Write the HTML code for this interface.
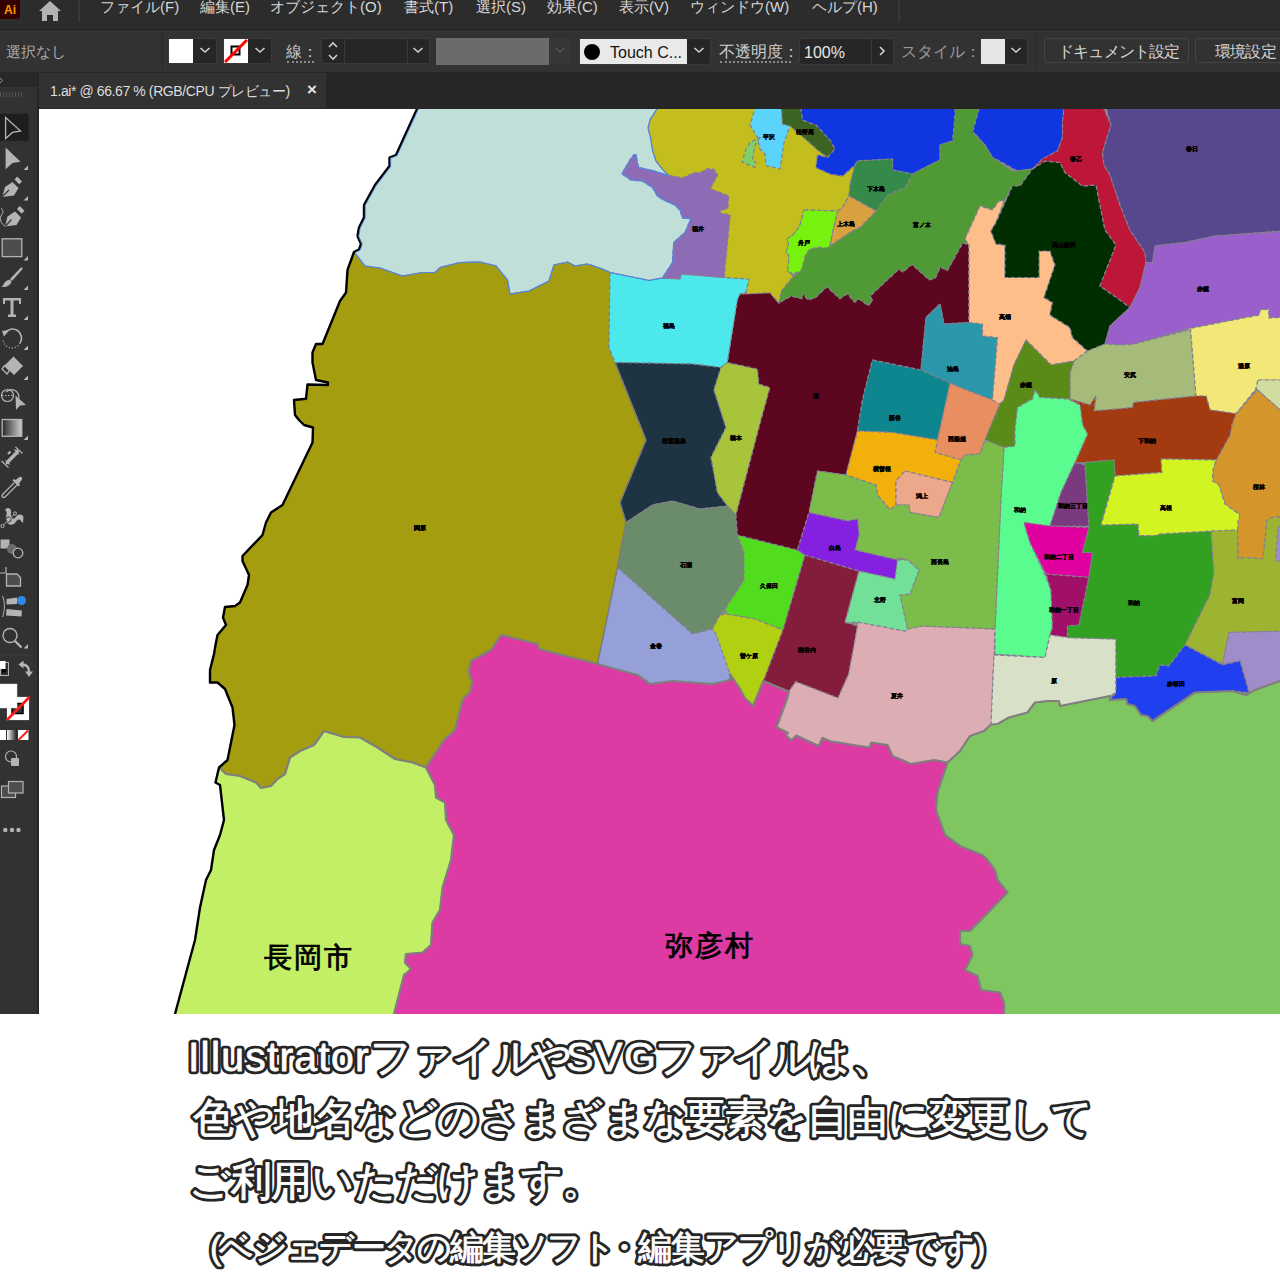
<!DOCTYPE html>
<html lang="ja"><head><meta charset="utf-8">
<style>
html,body{margin:0;padding:0;width:1280px;height:1280px;overflow:hidden;background:#fff;font-family:"Liberation Sans",sans-serif;}
.a{position:absolute;white-space:nowrap;}
#menubar{position:absolute;left:0;top:0;width:1280px;height:29px;background:#2c2c2c;border-bottom:1px solid #202020;}
#menubar .m{position:absolute;top:-2px;font-size:15px;line-height:18px;color:#d6d6d6;}
#ctrl{position:absolute;left:0;top:30px;width:1280px;height:42px;background:#323232;border-bottom:1px solid #262626;}
#tabbar{position:absolute;left:0;top:73px;width:1280px;height:36px;background:#262626;}
#tool{position:absolute;left:0;top:73px;width:37px;height:1207px;background:#323232;border-right:2px solid #262626;}
.dd{position:absolute;background:#262626;border:1px solid #3a3a3a;border-radius:3px;box-sizing:border-box;}
.txt{position:absolute;color:#fff;font-feature-settings:"palt";}
.ts{-webkit-text-stroke:5px #232323;color:#232323;}
</style></head><body>
<div id="menubar">
 <div class="a" style="left:0;top:0;width:20px;height:19px;background:#330000;border-radius:0 0 3px 0;"></div>
 <div class="a" style="left:4px;top:3px;font-size:12px;font-weight:bold;color:#ff9a00;line-height:14px;">Ai</div>
 <svg class="a" style="left:36px;top:0" width="28" height="24" viewBox="0 0 28 24"><path d="M14 1 L25 11 L22 11 L22 21 L17 21 L17 15 L11 15 L11 21 L6 21 L6 11 L3 11 Z" fill="#b3b3b3"/></svg>
 <div class="a" style="left:78px;top:0;width:2px;height:22px;background:#383838"></div>
 <div class="m a" style="left:100px">ファイル(F)</div>
 <div class="m a" style="left:200px">編集(E)</div>
 <div class="m a" style="left:270px">オブジェクト(O)</div>
 <div class="m a" style="left:404px">書式(T)</div>
 <div class="m a" style="left:476px">選択(S)</div>
 <div class="m a" style="left:547px">効果(C)</div>
 <div class="m a" style="left:619px">表示(V)</div>
 <div class="m a" style="left:690px">ウィンドウ(W)</div>
 <div class="m a" style="left:812px">ヘルプ(H)</div>
 <div class="a" style="left:898px;top:0;width:2px;height:22px;background:#383838"></div>
</div>
<div id="ctrl">
 <div class="a" style="left:6px;top:13px;font-size:15px;line-height:18px;color:#a9a9a9">選択なし</div>
 <div class="a" style="left:162px;top:2px;width:1px;height:38px;background:#2a2a2a"></div>
 <!-- fill swatch -->
 <div class="dd" style="left:168px;top:8px;width:49px;height:26px;"></div>
 <div class="a" style="left:169px;top:9px;width:24px;height:24px;background:#fff"></div>
 <svg class="a" style="left:199px;top:16px" width="12" height="8"><path d="M1.5 2 L6 6 L10.5 2" stroke="#cfcfcf" stroke-width="1.6" fill="none"/></svg>
 <!-- stroke swatch -->
 <div class="dd" style="left:223px;top:8px;width:49px;height:26px;"></div>
 <div class="a" style="left:224px;top:9px;width:24px;height:24px;background:#fff;overflow:hidden">
  <svg width="24" height="24"><rect x="7.5" y="7.5" width="8" height="8" fill="none" stroke="#000" stroke-width="2"/><path d="M1 23 L23 1" stroke="#ff0000" stroke-width="3"/></svg>
 </div>
 <svg class="a" style="left:254px;top:16px" width="12" height="8"><path d="M1.5 2 L6 6 L10.5 2" stroke="#cfcfcf" stroke-width="1.6" fill="none"/></svg>
 <div class="a" style="left:286px;top:13px;font-size:16px;line-height:18px;color:#c9c9c9">線：</div>
 <div class="a" style="left:287px;top:31px;width:27px;height:0;border-top:2px dotted #8a8a8a"></div>
 <div class="dd" style="left:321px;top:8px;width:109px;height:26px;"></div>
 <div class="a" style="left:344px;top:9px;width:1px;height:24px;background:#3a3a3a"></div>
 <div class="a" style="left:407px;top:9px;width:1px;height:24px;background:#3a3a3a"></div>
 <svg class="a" style="left:327px;top:11px" width="12" height="20"><path d="M2 6 L6 2 L10 6 M2 14 L6 18 L10 14" stroke="#cfcfcf" stroke-width="1.6" fill="none"/></svg>
 <svg class="a" style="left:412px;top:16px" width="12" height="8"><path d="M1.5 2 L6 6 L10.5 2" stroke="#cfcfcf" stroke-width="1.6" fill="none"/></svg>
 <div class="a" style="left:436px;top:8px;width:113px;height:27px;background:#6b6b6b"></div>
 <div class="a" style="left:549px;top:8px;width:22px;height:27px;background:#363636"></div>
 <svg class="a" style="left:554px;top:16px" width="12" height="8"><path d="M1.5 2 L6 6 L10.5 2" stroke="#555" stroke-width="1.6" fill="none"/></svg>
 <div class="dd" style="left:579px;top:8px;width:132px;height:27px;"></div>
 <div class="a" style="left:580px;top:9px;width:107px;height:25px;background:#e9e9e9"></div>
 <div class="a" style="left:584px;top:14px;width:16px;height:16px;border-radius:50%;background:#000"></div>
 <div class="a" style="left:610px;top:13px;font-size:16px;line-height:20px;color:#111">Touch C...</div>
 <svg class="a" style="left:693px;top:16px" width="12" height="8"><path d="M1.5 2 L6 6 L10.5 2" stroke="#cfcfcf" stroke-width="1.6" fill="none"/></svg>
 <div class="a" style="left:719px;top:13px;font-size:16px;line-height:18px;color:#cfcfcf">不透明度：</div>
 <div class="a" style="left:720px;top:31px;width:71px;height:0;border-top:2px dotted #8a8a8a"></div>
 <div class="dd" style="left:799px;top:8px;width:95px;height:27px;"></div>
 <div class="a" style="left:871px;top:9px;width:1px;height:25px;background:#3a3a3a"></div>
 <div class="a" style="left:804px;top:13px;font-size:16px;line-height:20px;color:#e6e6e6">100%</div>
 <svg class="a" style="left:877px;top:15px" width="10" height="12"><path d="M3 2 L7 6 L3 10" stroke="#cfcfcf" stroke-width="1.6" fill="none"/></svg>
 <div class="a" style="left:901px;top:13px;font-size:16px;line-height:18px;color:#9a9a9a">スタイル：</div>
 <div class="dd" style="left:980px;top:8px;width:48px;height:27px;"></div>
 <div class="a" style="left:981px;top:9px;width:24px;height:25px;background:#e6e6e6"></div>
 <svg class="a" style="left:1010px;top:16px" width="12" height="8"><path d="M1.5 2 L6 6 L10.5 2" stroke="#cfcfcf" stroke-width="1.6" fill="none"/></svg>
 <div class="a" style="left:1036px;top:2px;width:1px;height:38px;background:#2a2a2a"></div>
 <div class="dd" style="left:1044px;top:8px;width:145px;height:25px;background:#323232;border-color:#444"></div>
 <div class="a" style="left:1058px;top:13px;font-size:16px;line-height:18px;color:#d6d6d6;letter-spacing:-0.8px">ドキュメント設定</div>
 <div class="dd" style="left:1195px;top:8px;width:100px;height:25px;background:#323232;border-color:#444"></div>
 <div class="a" style="left:1215px;top:13px;font-size:16px;line-height:18px;color:#d6d6d6;letter-spacing:-0.8px">環境設定</div>
</div>
<div id="tabbar">
 <div class="a" style="left:0;top:0;width:37px;height:14px;background:#282828"></div>
 <div class="a" style="left:39px;top:0;width:287px;height:35px;background:#323232"></div>
 <div class="a" style="left:50px;top:9px;font-size:14px;line-height:18px;color:#dedede;letter-spacing:-0.4px">1.ai* @ 66.67 % (RGB/CPU プレビュー)</div>
 <div class="a" style="left:307px;top:7px;font-size:17px;line-height:20px;color:#e6e6e6;font-weight:bold">×</div>
</div>
<!--TOOLBAR--><svg class="a" style="left:0;top:0" width="40" height="1280" viewBox="0 0 40 1280">
<rect x="0" y="73" width="37" height="941" fill="#323232"/>
<rect x="37" y="73" width="2" height="941" fill="#262626"/>
<rect x="0" y="73" width="37" height="14" fill="#282828"/>
<path d="M0 78 L2.5 80.5 L0 83" stroke="#9a9a9a" stroke-width="1" fill="none"/>
<g fill="#555"><rect x="0" y="92" width="1" height="5"/><rect x="3" y="92" width="1" height="5"/><rect x="6" y="92" width="1" height="5"/><rect x="9" y="92" width="1" height="5"/><rect x="12" y="92" width="1" height="5"/><rect x="15" y="92" width="1" height="5"/><rect x="18" y="92" width="1" height="5"/><rect x="21" y="92" width="1" height="5"/></g>
<rect x="-2" y="113.5" width="31" height="27.5" rx="2.5" fill="#1e1e1e" stroke="#2b2b2b" stroke-width="1"/>
<g fill="#b4b4b4" stroke="none">
 <path d="M5.6 117.4 L20.6 131 L12.5 132.4 L5.6 138.6 Z" fill="none" stroke="#b4b4b4" stroke-width="1.3"/>
 <path d="M5.6 147.4 L20.6 161.75 L12.5 163 L5.6 169.25 Z"/>
 <path d="M28 165.5 L28 170 L23.5 170 Z"/>
 <!-- pen -->
 <path d="M2.2 197 L5 187 L12.5 182 L18.5 188 L14 195.5 Z"/>
 <path d="M14.5 179.5 L17.2 176.6 L22 181.4 L19.2 184.2 Z"/>
 <path d="M2.5 196.5 L9 190" stroke="#323232" stroke-width="1.3"/>
 <path d="M28 196 L28 200.5 L23.5 200.5 Z"/>
 <!-- curvature pen -->
 <path d="M5 226.5 L7.5 216.5 L15 211.5 L21 217.5 L16.5 225 Z"/>
 <path d="M17 209 L19.7 206 L24.5 210.8 L21.7 213.7 Z"/>
 <path d="M5.5 226 L11.5 219.5" stroke="#323232" stroke-width="1.3"/>
 <path d="M1 208 C4 210 3 213 1 216 C-0.5 219 1 224 5 226" fill="none" stroke="#b4b4b4" stroke-width="1"/>
 <!-- rect -->
 <rect x="2.2" y="238.8" width="19.6" height="17.8" fill="#4b4e4b" stroke="#b4b4b4" stroke-width="1.3"/>
 <path d="M28 256 L28 260.5 L23.5 260.5 Z"/>
 <!-- brush -->
 <path d="M21 267.5 C22.5 267 23 268.5 22.2 269.5 L12 281 L10 279 Z"/>
 <path d="M9.5 279.5 L11.5 281.5 C10.5 285 7 287.5 1.5 287 C4 285 4 281 9.5 279.5 Z"/>
 <path d="M28 285.5 L28 290 L23.5 290 Z"/>
 <!-- type -->
 <path d="M3 298 L21 298 L21 304 L19 304 L19 300.5 L13.5 300.5 L13.5 314.5 L16 314.5 L16 317 L8 317 L8 314.5 L10.5 314.5 L10.5 300.5 L5 300.5 L5 304 L3 304 Z"/>
 <path d="M28 315.5 L28 320 L23.5 320 Z"/>
 <!-- rotate -->
 <path d="M5 333 A9 9 0 1 1 20 343" fill="none" stroke="#b4b4b4" stroke-width="1.6" stroke-dasharray="0"/>
 <path d="M2 331 L9.5 330 L4 336.5 Z"/>
 <path d="M20 343 A9 9 0 0 1 3 340" fill="none" stroke="#b4b4b4" stroke-width="1.4" stroke-dasharray="1 2"/>
 <path d="M28 345.5 L28 350 L23.5 350 Z"/>
 <!-- eraser -->
 <path d="M13.5 356.5 L23 366 L14 375 L4.5 365.5 Z"/>
 <path d="M4.5 365.5 L9.5 370.5 L7 374 L2 369 Z" fill="none" stroke="#b4b4b4" stroke-width="1.3"/>
 <path d="M28 375.5 L28 380 L23.5 380 Z"/>
 <!-- shape builder -->
 <circle cx="7.5" cy="395.5" r="6" fill="none" stroke="#b4b4b4" stroke-width="1.2"/>
 <path d="M6 392 A7 7 0 1 1 17 402" fill="none" stroke="#b4b4b4" stroke-width="1.2"/>
 <path d="M2 395.5 L14 395.5" stroke="#b4b4b4" stroke-width="1" stroke-dasharray="1.5 1.5"/>
 <path d="M15.5 395.5 L26 405 L20 405.5 L16 410 Z"/>
 <!-- gradient -->
 <defs><linearGradient id="gr" x1="0" x2="1"><stop offset="0" stop-color="#2a2a2a"/><stop offset="1" stop-color="#cfcfcf"/></linearGradient>
 <linearGradient id="gr2" x1="0" x2="1"><stop offset="0" stop-color="#fff"/><stop offset="1" stop-color="#222"/></linearGradient></defs>
 <rect x="2.2" y="419.5" width="19.6" height="16.8" fill="url(#gr)" stroke="#b4b4b4" stroke-width="1.3"/>
 <path d="M28 435.5 L28 440 L23.5 440 Z"/>
 <!-- width tool -->
 <path d="M1.5 461 L8.5 467.5 M15.5 447 L22.5 453.5" stroke="#b4b4b4" stroke-width="1.2"/>
 <path d="M6 461.5 L9 458 L15 452 L18.5 451 L17.5 454.5 L11.5 460.5 L8.5 463.5 Z"/>
 <path d="M6 464 L5.5 459.5 L10.5 464.5 Z M18.5 450 L13.5 449.5 L19 455 Z"/>
 <path d="M8 454 L10.5 451.5" stroke="#b4b4b4" stroke-width="2.2"/>
 <!-- eyedropper -->
 <path d="M15.5 480 L19.5 477 C21.5 476.5 22.5 477.5 22 479.5 L19 483.5 L20 485 L18.5 486.5 L12.5 480.5 L14 479 Z"/>
 <path d="M14 483 L3 494 C1.5 495.5 1.5 497.5 3.5 497.5 C4.5 497.5 5 497 6 496 L17 485" fill="none" stroke="#b4b4b4" stroke-width="1.3"/>
 <!-- puppet warp -->
 <path d="M5 510 C8 506 12 509 11 513 C10.5 517 12 520 15 518 C17 514 22 513 23.5 517 L23 523 L21 521 C19 518 17 520 15 523 C12 526 7 525 6 520 C5 516 8 514 6 511 Z"/>
 <circle cx="2.5" cy="526" r="1.6" fill="none" stroke="#b4b4b4" stroke-width="1"/>
 <circle cx="15" cy="513.5" r="1.6" fill="none" stroke="#b4b4b4" stroke-width="1"/>
 <circle cx="8.5" cy="519.5" r="2.6" fill="none" stroke="#323232" stroke-width="1"/>
 <path d="M3.5 525 L14 514.5" stroke="#b4b4b4" stroke-width="1"/>
 <!-- blend / shapes -->
 <rect x="0.5" y="539.5" width="9" height="9"/>
 <circle cx="12" cy="549" r="5" fill="#6a6a6a"/>
 <circle cx="18" cy="553" r="4.8" fill="#323232" stroke="#b4b4b4" stroke-width="1.3"/>
 <!-- artboard -->
 <path d="M6 567 L6 573 M0 573 L6 573" stroke="#b4b4b4" stroke-width="1.2"/>
 <path d="M6.5 574 L17 574 L20.5 577.5 L20.5 586 L6.5 586 Z" fill="#4b4e4b" stroke="#b4b4b4" stroke-width="1.3"/>
 <!-- chart/perspective -->
 <path d="M2.5 596 C5 601 5 611 2.5 617" fill="none" stroke="#b4b4b4" stroke-width="1"/>
 <path d="M6.5 599 L17 597.5 L17 604 L6.5 604.5 Z"/>
 <path d="M6.5 609 L22 610.5 L21.5 616.5 L6 615.5 Z"/>
 <circle cx="21.5" cy="600.5" r="4.5" fill="#2d8ae6"/>
 <!-- zoom -->
 <circle cx="10" cy="635.5" r="7" fill="none" stroke="#b4b4b4" stroke-width="1.4"/>
 <path d="M15 641 L21.5 647.5" stroke="#b4b4b4" stroke-width="2.4"/>
 <path d="M28 644 L28 648.5 L23.5 648.5 Z"/>
</g>
<rect x="0" y="654.5" width="31" height="1" fill="#3c3c3c"/>
<!-- default fill/stroke mini -->
<rect x="0.5" y="662.5" width="8" height="13" fill="none" stroke="#b4b4b4" stroke-width="1"/>
<rect x="-2" y="661" width="7.5" height="8" fill="#fff"/>
<rect x="2" y="669" width="4" height="3.5" fill="#000"/>
<path d="M22 664.5 C26.5 664.5 29 667 29 672" fill="none" stroke="#b4b4b4" stroke-width="2.4"/><path d="M23.5 660.5 L18.5 664.5 L23.5 668.5 Z M25 671.5 L29 677 L33 671.5 Z" fill="#b4b4b4"/>
<!-- stroke swatch -->
<rect x="6.5" y="696.5" width="23" height="24" fill="#fff" stroke="#444" stroke-width="1"/>
<rect x="9" y="699" width="18" height="19" fill="#fff"/>
<rect x="12" y="703.5" width="11" height="10" fill="#333" stroke="#000" stroke-width="1.5"/>
<path d="M7 720 L29.5 697" stroke="#ff1a1a" stroke-width="2.6"/>
<!-- fill swatch -->
<rect x="-1" y="684" width="18" height="24" fill="#fff" stroke="#ddd" stroke-width="0.5"/>
<!-- color modes -->
<rect x="0" y="730" width="6" height="10" fill="#fff"/>
<rect x="7" y="730" width="9.5" height="10" fill="url(#gr2)"/>
<rect x="18" y="730" width="10.5" height="10" fill="#fff"/>
<path d="M18.5 740 L28 730.5" stroke="#ff1a1a" stroke-width="2"/>
<!-- draw mode -->
<circle cx="11" cy="756.5" r="5.5" fill="none" stroke="#b4b4b4" stroke-width="1.2"/>
<rect x="11" y="758" width="8" height="8" rx="1" fill="#b4b4b4"/>
<!-- screen mode -->
<rect x="1.5" y="786" width="14" height="11.5" fill="#4b4e4b" stroke="#b4b4b4" stroke-width="1.2"/>
<rect x="8.5" y="781.5" width="14.5" height="11.5" fill="#4b4e4b" stroke="#b4b4b4" stroke-width="1.2"/>
<g fill="#b4b4b4"><circle cx="5.3" cy="830" r="2.2"/><circle cx="12" cy="830" r="2.2"/><circle cx="18.5" cy="830" r="2.2"/></g>
</svg>
<!--/TOOLBAR-->
<!--MAP--><svg class="a" style="left:0;top:0" width="1280" height="1280" viewBox="0 0 1280 1280">
<defs><clipPath id="mc"><rect x="39" y="109" width="1241" height="905"/></clipPath></defs>
<rect x="39" y="109" width="1241" height="905" fill="#fff"/>
<g clip-path="url(#mc)">
<rect x="600" y="100" width="690" height="680" fill="#8a8a8a"/>
<g stroke="#848090" stroke-width="1.2" stroke-dasharray="4 2.5" stroke-linejoin="round">
<polygon fill="#c0dfd9" points="417,100 417,109 396,155 389.5,157.5 389.5,166 375,185 364,205 364,217.5 359,227.5 357.5,236 361,244 359,249.5 354,252 365,266 380,268 402.5,276 422.5,272.5 435,272.5 440,267.5 460,262.5 480,262 496,266 507.5,280 510,294 529,291 549,281 554,265 567.5,262 575,266 587.5,264 602.5,269 610,272.5 649,280.5 662.5,278 672.5,262.5 673.75,242.5 685,232.5 691,218.75 682.5,218 680,210 675,205 663.75,200 657.5,196 652.5,187.5 642.5,181 631,180 621.9,173.75 630,160 633.75,155 636,154.4 637.5,163.75 638.75,167.5 652.5,170.6 668.75,175.6 663,170 656,161 652.5,150 650.6,137.5 648,128 650,120 656.9,109 657,100"/>
<polygon fill="#a39d0f" points="354,252 347.5,270 346,292.5 340,301 322.5,344 316,344 312.5,352.5 312.5,362.5 316,380 328,382.5 328,385 307.5,384.5 306,398.75 294,400 295,415 299,420 304,425 313,427.5 312.5,442.5 282.5,505 271,512.5 266,522.5 262.5,535 242.5,556 242.5,561 249,575 247.5,585 240,602.5 235,606 225,607 223,617.5 226,625 217.5,635 215.5,645 214,654 210,670 210,682.5 217.5,682.5 225,689 232.5,707.5 234.5,725 227.5,760 219,767.5 226,774 240,776 256,782.5 261,788 271,786 277.5,779 285,774 290,757.5 300,751 314,745 324,731 344,737 360,737.5 377.5,747.5 395,759 412.5,762.5 426,767.5 444,740 455,730 462.5,700 464,697.5 470,692.5 472.5,681 470,677.5 469,670 471,661 480,656 491,650 501,635 537.5,644 539,649 597.5,664 617.5,567.5 626,522.5 620,502.5 646,440 615,362.5 609,347.5 610,272.5 602.5,269 587.5,264 575,266 567.5,262 554,265 549,281 529,291 510,294 507.5,280 496,266 480,262 460,262.5 440,267.5 435,272.5 422.5,272.5 402.5,276 380,268 365,266"/>
<polygon fill="#c2ef66" points="219,767.5 215.5,782.5 220,785 224,820 220,835 214,850 211,870 206,880 200,907.5 195,940 175,1014 175,1030 394,1030 394,1014 404,975 411,969 405,962.5 406,954 422.5,952.5 431,945 432.5,922.5 440,910 442.5,887.5 451,860 454,835 446,820 445,802.5 436,797.5 435,785 426,767.5 412.5,762.5 395,759 377.5,747.5 360,737.5 344,737 324,731 314,745 300,751 290,757.5 285,774 277.5,779 271,786 261,788 256,782.5 240,776 226,774"/>
<polygon fill="#dd3ba3" points="426,767.5 435,785 436,797.5 445,802.5 446,820 454,835 451,860 442.5,887.5 440,910 432.5,922.5 431,945 422.5,952.5 406,954 405,962.5 411,969 404,975 394,1014 394,1030 1004,1030 1004,1002.5 1000,992.5 981,990 977.5,976 965,970 972.5,955 970,946 960,944 960,931 970,931 1007.5,892.5 997.5,880 995,870 987.5,860 982.5,855 960,846 945,835 936,810 937.5,792.5 947.5,762.5 934,760 911,764 892.5,756 887.5,745 871,742.5 870,747.5 860,746 830,741.25 822.5,738 818.75,746 796.25,735.6 791.6,740.3 786,735.6 787.8,732.8 776.6,727.2 787.3,698 788.75,691.6 763.4,681 753.1,705.6 744.7,698 740,688.75 730,674 730,680 712.5,684 672.5,681 650,684 637.5,675 597.5,664 539,649 537.5,644 501,635 491,650 480,656 471,661 469,670 470,677.5 472.5,681 470,692.5 464,697.5 462.5,700 455,730 444,740"/>
<polygon fill="#80c660" points="947.5,762.5 960,751 970,736 984,731 991,724.5 997.5,724 1009,717.5 1027.5,712.5 1035,702.5 1047.5,701 1059,701 1060,706 1110,696 1110,700 1126,699 1127.5,704 1135,706 1141,715 1147.5,716 1152.5,721 1195,692.5 1232.5,691 1246,695 1255,690 1280,681 1290,679 1290,1030 1004,1030 1004,1002.5 1000,992.5 981,990 977.5,976 965,970 972.5,955 970,946 960,944 960,931 970,931 1007.5,892.5 997.5,880 995,870 987.5,860 982.5,855 960,846 945,835 936,810 937.5,792.5"/>
<polygon fill="#4de8ec" points="610,272.5 649,280.5 662.5,278 680,279 681,274 724,277.5 749,279 746,292.5 740,294 737.5,300 727.5,362.5 721,367.5 692.5,364 615,362.5 609,347.5"/>
<polygon fill="#1e3442" points="615,362.5 692.5,364 721,367.5 714,390 726,427.5 711,457.5 717.5,492.5 727.5,506 700,509 672.5,501 652.5,505 626,522.5 620,502.5 646,440"/>
<polygon fill="#a8c43a" points="721,367.5 727.5,362.5 757.5,369 759,384 770,387.5 761,420 736,515 727.5,506 717.5,492.5 711,457.5 726,427.5 714,390"/>
<polygon fill="#6a8c6a" points="626,522.5 652.5,505 672.5,501 700,509 727.5,506 736,515 737.5,535 744,552.5 744,580 726,607.5 720,615 712.5,629 692.5,634 617.5,567.5"/>
<polygon fill="#95a0d8" points="617.5,567.5 692.5,634 712.5,629 716,634 730,672.5 730,680 712.5,684 672.5,681 650,684 637.5,675 597.5,664"/>
<polygon fill="#52dc1e" points="737.5,535 797.5,550 805,555 783,630 755,619 726,614 726,607.5 744,580 744,552.5"/>
<polygon fill="#b2d012" points="720,615 726,614 755,619 783,630 763.4,681 753.1,705.6 744.7,698 740,688.75 730,674 716,634 712.5,629"/>
<polygon fill="#841d3c" points="805,555 859,571 845,622.5 857.5,626 848.75,673.75 838,698 795.8,681.7 788.75,691.6 763.4,681 783,630"/>
<polygon fill="#dcaeb4" points="857.5,622 905,631 907.5,629 922.5,626 995,629 994,655 991,724.5 984,731 970,736 960,751 947.5,762.5 934,760 911,764 892.5,756 887.5,745 871,742.5 870,747.5 860,746 830,741.25 822.5,738 818.75,746 796.25,735.6 791.6,740.3 786,735.6 787.8,732.8 776.6,727.2 787.3,698 788.75,691.6 795.8,681.7 838,698 848.75,673.75 857.5,626"/>
<polygon fill="#5c0620" points="740,294 770,292.7 778.9,303 791,296 802,298.7 803,292.7 807.3,299.6 815,297.9 827,286.7 839.9,298.7 847.6,293.6 854.5,302.2 858.8,298.7 868.2,305.6 872.5,300.4 870,296 899.2,268.7 902.6,272.1 912,264.4 929.2,279.8 935.3,278.1 940.4,266.9 947.3,270.4 962.7,242.9 968.8,244.6 969,322.5 944,324 940,304 926,317.5 921,370 872.5,360 862.5,400 857.5,431 846,475 817.5,471 809,512.5 797.5,550 737.5,535 736,515 761,420 770,387.5 759,384 757.5,369 727.5,362.5 737.5,300"/>
<polygon fill="#c3bd1e" points="657,100 656.9,109 650,120 648,128 650.6,137.5 652.5,150 656,161 663,170 668.75,175.6 682.5,178 695,172.5 700,173 707.5,168.75 713.75,169.4 717.5,175 710,188.75 728.75,196 727.5,208.75 721,210 719.4,213 730,215 724,277.5 749,279 746,292.5 740,294 770,292.7 778.9,303 781.5,291 793.5,276.4 787.5,271.2 789.2,255.8 785.8,252.3 788.4,245.5 787.5,238.6 792.6,235.2 797,230 800,225 804,210 837.5,211 842.5,207.5 849,196 850,185 855,165 842.5,176 830,174 816,167.5 817.5,155 827.5,157.5 835,149 830,140 816,125 802.5,120 800,109.5 800,100"/>
<polygon fill="#8e6cb5" points="668.75,175.6 682.5,178 695,172.5 700,173 707.5,168.75 713.75,169.4 717.5,175 710,188.75 728.75,196 727.5,208.75 721,210 719.4,213 730,215 724,277.5 681,274 680,279 662.5,278 672.5,262.5 673.75,242.5 685,232.5 691,218.75 682.5,218 680,210 675,205 663.75,200 657.5,196 652.5,187.5 642.5,181 631,180 621.9,173.75 630,160 633.75,155 636,154.4 637.5,163.75 638.75,167.5 652.5,170.6"/>
<polygon fill="#5ad4fa" points="757.5,100 781,100 782.5,124 790,126 784,142.5 780,169 766,165.5 765,154 760,149 757.5,137.5 750,125"/>
<polygon fill="#80d06a" points="760,137.5 755,145 752.5,160 756,162.5 755,167.5 742,162 746,149 750,142.5"/>
<polygon fill="#3d6322" points="781,100 800,100 802.5,120 816,125 830,140 835,149 827.5,157.5 817.5,150 807.5,141 790,126 782.5,124"/>
<polygon fill="#0f36e0" points="800,100 1065,100 1062.5,122.5 1062.5,137.5 1057.5,151 1042.5,159 1032.5,169 1017.5,171 1002.5,162.5 992.5,157.5 985,145 974,132.5 952.5,141 940,145 940,160 912.5,174 892.5,170 892.5,159 857.5,161 855,165 842.5,176 830,174 816,167.5 817.5,155 827.5,157.5 835,149 830,140 816,125 802.5,120"/>
<polygon fill="#4f9a35" points="955,100 979,100 979,109.5 972.5,132.5 985,145 992.5,157.5 1012.5,171 1032.5,169 1020,186 1012.5,186 1004,201 999,201 992.5,210 980,206 965,239 968.8,244.6 962.7,242.9 947.3,270.4 940.4,266.9 935.3,278.1 929.2,279.8 912,264.4 902.6,272.1 899.2,268.7 870,296 872.5,300.4 868.2,305.6 858.8,298.7 854.5,302.2 847.6,293.6 839.9,298.7 827,286.7 815,297.9 807.3,299.6 803,292.7 802,298.7 791,296 778.9,303 781.5,291 793.5,276.4 801.2,270.4 805.5,254.9 809.8,248.9 818.4,247.2 827,248 830.4,245.5 853.6,230 860,227.5 876,211 887.5,195 905,187.5 912.5,174 940,160 940,145 952.5,141 955,114"/>
<polygon fill="#358a4a" points="857.5,161 892.5,159 892.5,170 912.5,174 905,187.5 887.5,195 876,211 849,196 850,185 855,165"/>
<polygon fill="#d9a040" points="849,196 876,211 860,227.5 853.6,230 830.4,245.5 833,230 837.5,211 842.5,207.5"/>
<polygon fill="#76f20e" points="804,210 837.5,211 833,230 829.6,246.3 827,248 818.4,247.2 809.8,248.9 805.5,254.9 801.2,270.4 793.5,273.8 787.5,271.2 789.2,255.8 785.8,252.3 788.4,245.5 787.5,238.6 792.6,235.2 797,230 800,225"/>
<polygon fill="#2a98aa" points="926,317.5 940,304 944,324 969,322.5 982.5,324 982.5,336 997.5,337.5 992.5,400 960,387.5 950,383 921,370"/>
<polygon fill="#0e8690" points="872.5,360 921,370 950,383 937.5,440 907.5,435 892.5,432.5 857.5,431 862.5,400"/>
<polygon fill="#e88e60" points="950,383 960,387.5 992.5,400 1000,404 985,440 980,454 965,455 961,460 935,452.5 937.5,440"/>
<polygon fill="#fdbe8a" points="965,239 980,206 992.5,210 999,201 1004,201 996,222.5 991,231 996,244 1005,245 1005,277.5 1039,277.5 1039,251 1050,251 1055,265 1044,297.5 1052.5,302.5 1050,315 1070,327.5 1072.5,337.5 1087.5,351 1074,361 1051,365 1026,340 1014,365 1004,400 1000,404 992.5,400 997.5,337.5 982.5,336 982.5,324 969,322.5 969,245"/>
<polygon fill="#002e00" points="1032.5,169 1045,161 1060,162.5 1065,172.5 1082.5,186 1096,185 1105,230 1116,245 1100,286 1120,300 1130,307.5 1110,326 1105,344 1087.5,351 1072.5,337.5 1070,327.5 1050,315 1052.5,302.5 1044,297.5 1055,265 1050,251 1039,251 1039,277.5 1005,277.5 1005,245 996,244 991,231 996,222.5 1012.5,186 1020,186"/>
<polygon fill="#be1638" points="1065,100 1104,100 1104,109.5 1111,125 1102.5,152.5 1104,165 1110,175 1120,205 1130,230 1145,252.5 1146,262.5 1140,287.5 1130,307.5 1120,300 1100,286 1116,245 1105,230 1096,185 1082.5,186 1065,172.5 1060,162.5 1045,161 1032.5,169 1042.5,159 1057.5,151 1062.5,137.5 1062.5,122.5"/>
<polygon fill="#57478c" points="1104,100 1290,100 1290,231 1280,231 1215,236 1185,242.5 1155,246 1152.5,262.5 1146,262.5 1145,252.5 1130,230 1120,205 1110,175 1104,165 1102.5,152.5 1111,125"/>
<polygon fill="#9b5fcc" points="1152.5,262.5 1155,246 1185,242.5 1215,236 1290,231 1290,317 1268.75,318 1268.75,309.4 1260,310 1259.4,315 1185,329.4 1132.5,344.4 1120,345 1105,344 1110,326 1130,307.5 1140,287.5 1146,262.5"/>
<polygon fill="#a6ba7a" points="1074,361 1087.5,351 1105,344 1120,345 1132.5,344.4 1190.6,329.4 1196,396 1133.75,402.5 1132.5,407.5 1120,408.75 1094,411 1096,396 1090,405 1070,399 1070,372.5"/>
<polygon fill="#f2e878" points="1185,329.4 1259.4,315 1260,310 1268.75,309.4 1268.75,318 1290,317 1290,380 1258,380 1256,388.75 1236,413.75 1210,410 1206,396 1196,396 1190.6,329.4"/>
<polygon fill="#d0dca0" points="1258,380 1290,380 1290,412 1280,410 1257.5,390 1256,388.75"/>
<polygon fill="#d4952a" points="1257.5,390 1280,410 1290,412 1290,517.5 1274,517 1267,520 1263,559 1245,557.5 1238,559 1237.5,530 1238,521 1240,515 1225,504 1219,485 1212.5,481 1213,470 1216,460 1219,455 1230,435 1232,424 1236,413.75"/>
<polygon fill="#a33a10" points="1070,399 1090,405 1096,396 1094,411 1120,408.75 1132.5,407.5 1133.75,402.5 1196,396 1206,396 1210,410 1236,413.75 1232,424 1230,435 1219,455 1216,460 1161,459 1162,472.5 1120,475.6 1115,476 1114,460 1085,462.5 1075,462.5 1087.5,434 1082.5,425 1080,405"/>
<polygon fill="#5a8a18" points="1026,340 1051,365 1074,361 1070,372.5 1070,399 1067.5,399 1040,397.5 1035,390 1032.5,399 1017.5,407.5 1015,430 1015,446 1004,447.5 985,440 1000,404 1004,400 1014,365"/>
<polygon fill="#5afc90" points="1035,390 1040,397.5 1067.5,399 1080,405 1082.5,425 1087.5,434 1075,462.5 1061,492.5 1050,526 1024,522.5 1030,542.5 1045,575 1051,590 1052.5,627.5 1050,635 1045,657.5 995,654 995,629 1001,497.5 1004,447.5 1015,446 1015,430 1017.5,407.5 1032.5,399"/>
<polygon fill="#f2b00a" points="857.5,431 892.5,432.5 907.5,435 937.5,440 935,452.5 961,460 952.5,482.5 905,471 896,481 896,505 890,510 877.5,495 876,485 846,475"/>
<polygon fill="#eca88a" points="905,471 952.5,482.5 939,517.5 910,512.5 909,505 896,505 896,481"/>
<polygon fill="#7cbc4a" points="817.5,471 846,475 876,485 877.5,495 890,510 896,505 909,505 910,512.5 939,517.5 952.5,482.5 961,460 965,455 980,454 985,440 1004,447.5 1001,497.5 995,629 922.5,626 907.5,629 900,595 910,594 919,570 907.5,560 899,557.5 897.5,560 855,550 859,535 857.5,519 847.5,521 809,512.5"/>
<polygon fill="#8620e0" points="809,512.5 847.5,521 857.5,519 859,535 855,550 897.5,560 895,579 859,571 805,555 797.5,550"/>
<polygon fill="#72e096" points="897.5,560 907.5,560 919,570 910,594 900,595 907.5,629 905,631 857.5,622 845,622.5 859,571 895,579"/>
<polygon fill="#7a3a80" points="1075,462.5 1085,465 1089,526 1050,526 1061,492.5"/>
<polygon fill="#e000a0" points="1024,522.5 1050,526 1089,527.5 1082.5,552.5 1092.5,552.5 1089,577.5 1046,574 1030,542.5"/>
<polygon fill="#a01068" points="1046,574 1089,577.5 1079,625 1067.5,626 1067.5,637.5 1050,635 1052.5,627.5 1051,590"/>
<polygon fill="#d9e0c8" points="994,655 1045,657.5 1050,635 1067.5,637.5 1116,639 1116,692.5 1110,696 1060,706 1059,701 1047.5,701 1035,702.5 1027.5,712.5 1009,717.5 997.5,724 991,724.5"/>
<polygon fill="#32a020" points="1085,462.5 1114,460 1115,476 1101,525 1138,524 1139,535.6 1156,535.6 1159,534 1211,531 1214,572.5 1210,595 1185,645 1169,666 1160,665 1156,676 1116,677.5 1116,639 1067.5,637.5 1067.5,626 1079,625 1089,577.5 1092.5,552.5 1082.5,552.5 1089,527.5"/>
<polygon fill="#d2f420" points="1115,476 1162,472.5 1161,459 1216,460 1213,470 1212.5,481 1219,485 1225,504 1240,515 1238,521 1237.5,530 1211,531 1159,534 1156,535.6 1139,535.6 1138,524 1101,525"/>
<polygon fill="#9cb432" points="1211,531 1237.5,530 1238,559 1245,557.5 1263,559 1267,520 1274,517 1290,517.5 1290,631 1229,632.5 1222.5,664 1185,645 1210,595 1214,572.5"/>
<polygon fill="#a08cc8" points="1229,632.5 1290,631 1290,679 1280,681 1255,690 1249,692.5 1240,661 1222.5,664"/>
<polygon fill="#a08cc8" points="1278,527 1290,525 1290,561 1275.6,561"/>
<polygon fill="#2040f0" points="1116,677.5 1156,676 1160,665 1169,666 1185,645 1222.5,665 1240,661 1249,692.5 1232.5,691 1195,692.5 1152.5,721 1147.5,716 1141,715 1135,706 1127.5,704 1126,699 1110,700 1116,692.5"/>
</g>
<polyline fill="none" stroke="#7a7a7a" stroke-width="1.3" points="615,362.5 646,440 620,502.5 626,522.5 617.5,567.5 597.5,664"/>
<polyline fill="none" stroke="#7f7f7f" stroke-width="2.2" stroke-linejoin="round" points="219,767.5 226,774 240,776 256,782.5 261,788 271,786 277.5,779 285,774 290,757.5 300,751 314,745 324,731 344,737 360,737.5 377.5,747.5 395,759 412.5,762.5 426,767.5 435,785 436,797.5 445,802.5 446,820 454,835 451,860 442.5,887.5 440,910 432.5,922.5 431,945 422.5,952.5 406,954 405,962.5 411,969 404,975 394,1014 394,1030"/>
<polyline fill="none" stroke="#7f7f7f" stroke-width="2.2" stroke-linejoin="round" points="426,767.5 444,740 455,730 462.5,700 464,697.5 470,692.5 472.5,681 470,677.5 469,670 471,661 480,656 491,650 501,635 537.5,644 539,649 597.5,664 637.5,675 650,684 672.5,681 712.5,684 730,680 730,674 740,688.75 744.7,698 753.1,705.6 763.4,681 788.75,691.6 787.3,698 776.6,727.2 787.8,732.8 786,735.6 791.6,740.3 796.25,735.6 818.75,746 822.5,738 830,741.25 860,746 870,747.5 871,742.5 887.5,745 892.5,756 911,764 934,760 947.5,762.5 937.5,792.5 936,810 945,835 960,846 982.5,855 987.5,860 995,870 997.5,880 1007.5,892.5 970,931 960,931 960,944 970,946 972.5,955 965,970 977.5,976 981,990 1000,992.5 1004,1002.5 1004,1030"/>
<polyline fill="none" stroke="#7f7f7f" stroke-width="2.2" stroke-linejoin="round" points="947.5,762.5 960,751 970,736 984,731 991,724.5 997.5,724 1009,717.5 1027.5,712.5 1035,702.5 1047.5,701 1059,701 1060,706 1110,696 1110,700 1126,699 1127.5,704 1135,706 1141,715 1147.5,716 1152.5,721 1195,692.5 1232.5,691 1246,695 1255,690 1280,681 1290,679"/>
<polyline fill="none" stroke="#4f86e8" stroke-width="1.1" points="354,252 365,266 380,268 402.5,276 422.5,272.5 435,272.5 440,267.5 460,262.5 480,262 496,266 507.5,280 510,294 529,291 549,281 554,265 567.5,262 575,266 587.5,264 602.5,269 610,272.5 649,280.5 662.5,278 672.5,262.5 673.75,242.5 685,232.5 691,218.75 682.5,218 680,210 675,205 663.75,200 657.5,196 652.5,187.5 642.5,181 631,180 621.9,173.75 630,160 633.75,155 636,154.4 637.5,163.75 638.75,167.5 652.5,170.6 668.75,175.6 663,170 656,161 652.5,150 650.6,137.5 648,128 650,120 656.9,109 657,100"/>
<polyline fill="none" stroke="#000" stroke-width="2.4" stroke-linejoin="round" points="417,100 417,109 396,155 389.5,157.5 389.5,166 375,185 364,205 364,217.5 359,227.5 357.5,236 361,244 359,249.5 354,252 347.5,270 346,292.5 340,301 322.5,344 316,344 312.5,352.5 312.5,362.5 316,380 328,382.5 328,385 307.5,384.5 306,398.75 294,400 295,415 299,420 304,425 313,427.5 312.5,442.5 282.5,505 271,512.5 266,522.5 262.5,535 242.5,556 242.5,561 249,575 247.5,585 240,602.5 235,606 225,607 223,617.5 226,625 217.5,635 215.5,645 214,654 210,670 210,682.5 217.5,682.5 225,689 232.5,707.5 234.5,725 227.5,760 219,767.5 215.5,782.5 220,785 224,820 220,835 214,850 211,870 206,880 200,907.5 195,940 175,1014 173,1030"/>
<polyline fill="none" stroke="#4f86e8" stroke-width="0.8" transform="translate(1.2,0.6)" points="417,100 417,109 396,155 389.5,157.5 389.5,166 375,185 364,205 364,217.5 359,227.5 357.5,236 361,244 359,249.5 354,252"/>
<g font-size="6" font-weight="bold" fill="#000" stroke="#000" stroke-width="0.3" text-anchor="middle">
<text x="420" y="530.2">関原</text>
<text x="669" y="328.2">福島</text>
<text x="698" y="231.2">福井</text>
<text x="769" y="139.2">平沢</text>
<text x="805" y="134.2">松野尾</text>
<text x="876" y="191.2">下木島</text>
<text x="846" y="226.2">上木島</text>
<text x="804" y="245.2">舟戸</text>
<text x="922" y="227.2">富ノ木</text>
<text x="1076" y="161.2">春乙</text>
<text x="1192" y="151.2">春日</text>
<text x="1064" y="247.2">高山新田</text>
<text x="1005" y="319.2">高畑</text>
<text x="1203" y="291.2">赤鏡</text>
<text x="1130" y="377.2">安尻</text>
<text x="1244" y="368.2">湯原</text>
<text x="1026" y="387.2">赤鏡</text>
<text x="953" y="371.2">油島</text>
<text x="816" y="398.2">栄</text>
<text x="895" y="420.2">新谷</text>
<text x="957" y="441.2">西船越</text>
<text x="882" y="471.2">横曽根</text>
<text x="922" y="498.2">潟上</text>
<text x="674" y="443.2">岩室温泉</text>
<text x="736" y="440.2">橋本</text>
<text x="1147" y="443.2">下和納</text>
<text x="1166" y="510.2">高根</text>
<text x="1259" y="489.2">桜林</text>
<text x="1020" y="512.2">和納</text>
<text x="1073" y="508.2">和納三丁目</text>
<text x="1059" y="559.2">和納二丁目</text>
<text x="1064" y="612.2">和納一丁目</text>
<text x="940" y="564.2">西長島</text>
<text x="835" y="550.2">白島</text>
<text x="686" y="567.2">石瀬</text>
<text x="769" y="588.2">久保田</text>
<text x="880" y="602.2">北野</text>
<text x="1134" y="605.2">和納</text>
<text x="1238" y="603.2">富岡</text>
<text x="656" y="648.2">金巻</text>
<text x="749" y="658.2">曽ケ原</text>
<text x="807" y="652.2">南谷内</text>
<text x="1054" y="683.2">原</text>
<text x="1176" y="686.2">赤塚田</text>
<text x="897" y="698.2">夏井</text>
</g>
<g font-size="28" fill="#000" stroke="#000" stroke-width="0.8" text-anchor="middle" letter-spacing="2"><text x="309" y="967">長岡市</text><text x="710" y="955">弥彦村</text></g>
</g></svg><!--/MAP-->
<!--TEXT--><svg class="a" style="left:0;top:1014px" width="1280" height="266" viewBox="0 1014 1280 266" font-family="Liberation Sans, sans-serif">
<g fill="#262626" stroke="#262626" stroke-width="6.6" stroke-linejoin="round">
<text y="1071.3" font-size="41"><tspan x="188" letter-spacing="1.2">Illustrator</tspan><tspan x="370" letter-spacing="-0.8">ファイル</tspan><tspan x="530">や</tspan><tspan x="566" letter-spacing="1.6">SVG</tspan><tspan x="655" letter-spacing="-3.2">ファイル</tspan><tspan x="808">は</tspan><tspan x="852">、</tspan></text>
<text x="192.5" y="1132.3" font-size="41" letter-spacing="-0.7">色や地名などのさまざまな要素を自由に変更して</text>
<text x="189" y="1195.3" font-size="41" letter-spacing="-0.3">ご利用いただけます。</text>
<text y="1259.2" font-size="34"><tspan x="210" letter-spacing="-1.9">(ベジェデータの編集ソフト</tspan><tspan x="607">・</tspan><tspan x="638" letter-spacing="-1.0">編集アプリが必要です)</tspan></text>
</g>
<g fill="#fff" stroke="#fff" stroke-width="0.8" stroke-linejoin="round">
<text y="1071.3" font-size="41"><tspan x="188" letter-spacing="1.2">Illustrator</tspan><tspan x="370" letter-spacing="-0.8">ファイル</tspan><tspan x="530">や</tspan><tspan x="566" letter-spacing="1.6">SVG</tspan><tspan x="655" letter-spacing="-3.2">ファイル</tspan><tspan x="808">は</tspan><tspan x="852">、</tspan></text>
<text x="192.5" y="1132.3" font-size="41" letter-spacing="-0.7">色や地名などのさまざまな要素を自由に変更して</text>
<text x="189" y="1195.3" font-size="41" letter-spacing="-0.3">ご利用いただけます。</text>
<text y="1259.2" font-size="34"><tspan x="210" letter-spacing="-1.9">(ベジェデータの編集ソフト</tspan><tspan x="607">・</tspan><tspan x="638" letter-spacing="-1.0">編集アプリが必要です)</tspan></text>
</g>
</svg>
<!--/TEXT-->
</body></html>
